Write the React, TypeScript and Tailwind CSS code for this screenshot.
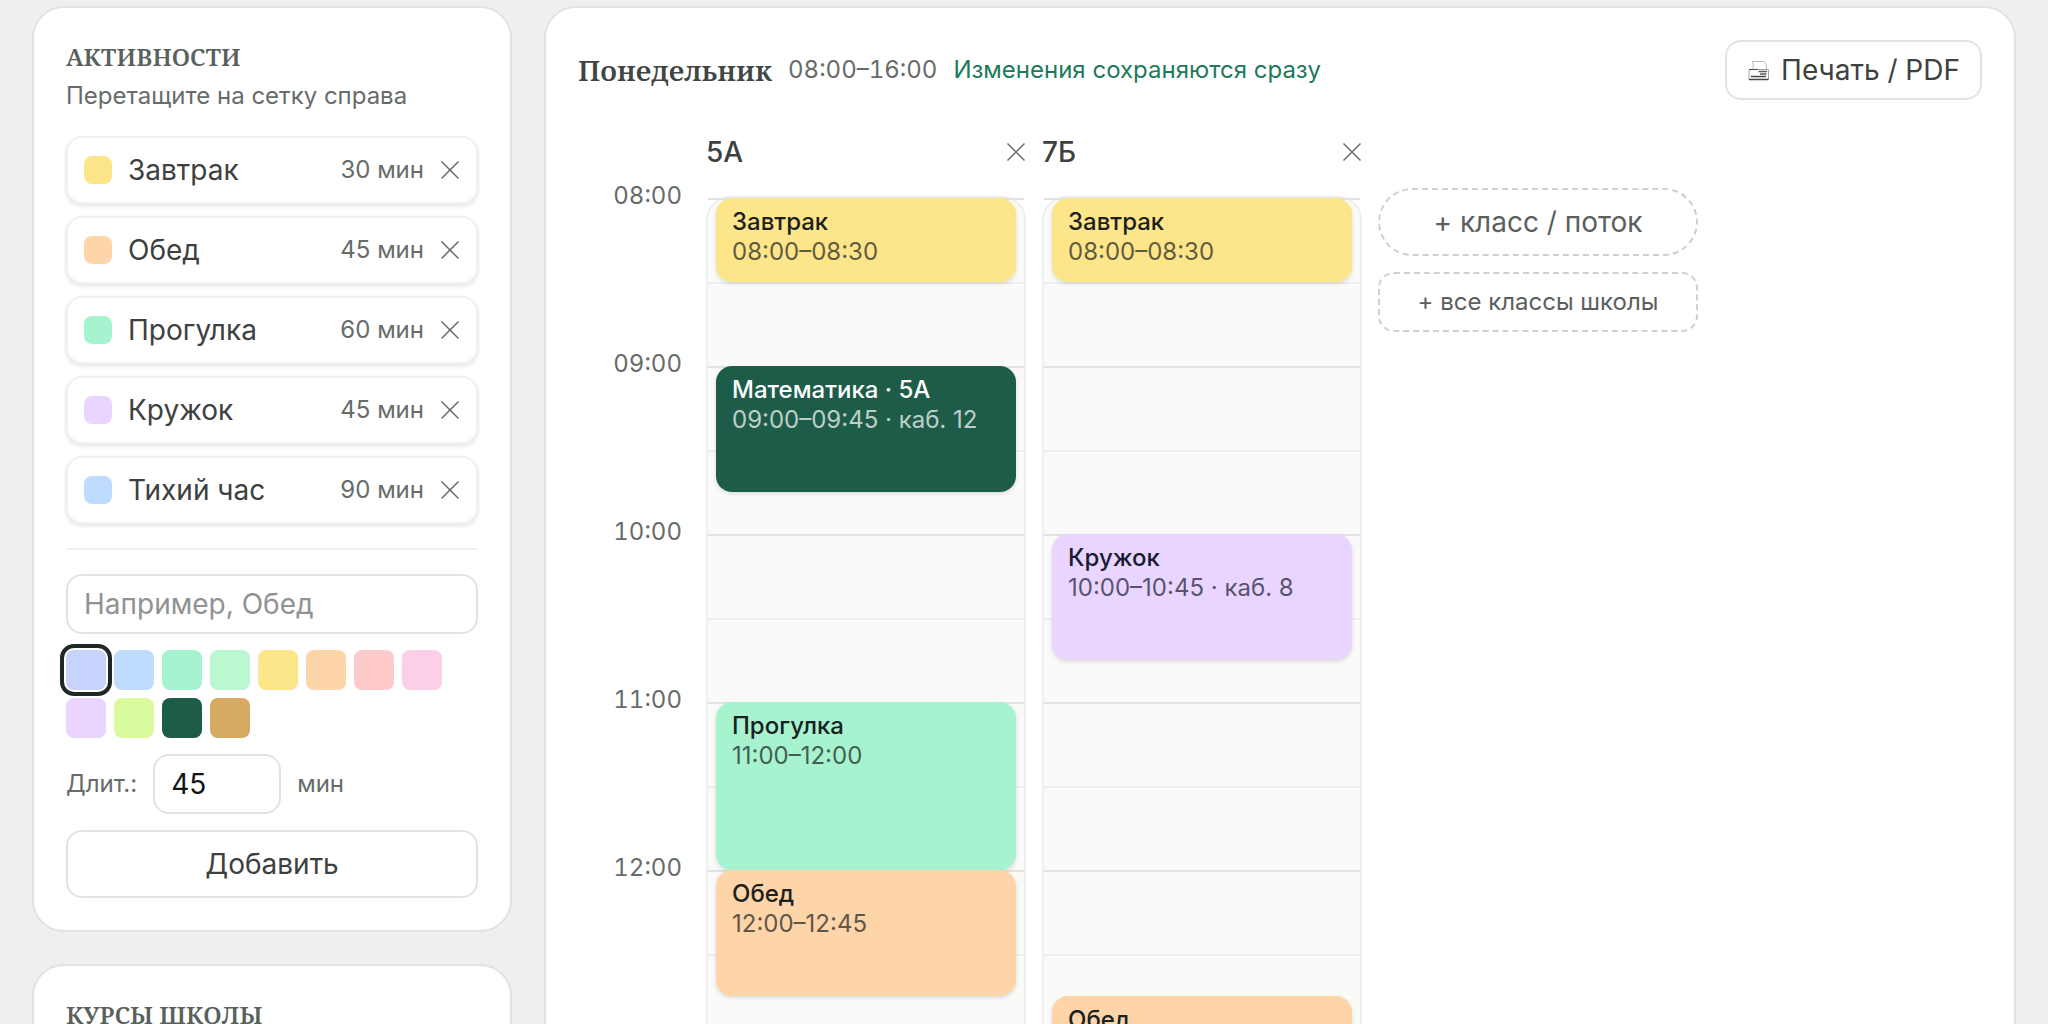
import { useState } from "react";

const PX_PER_MIN = 2.8;
const DAY_START = 8 * 60;

interface Activity {
  name: string;
  minutes: number;
  color: string;
}

interface ScheduleEvent {
  title: string;
  start: number;
  end: number;
  room?: string;
  className: string;
}

interface ClassColumn {
  name: string;
  events: ScheduleEvent[];
}

const ACTIVITIES: Activity[] = [
  { name: "Завтрак", minutes: 30, color: "bg-[#fde58a]" },
  { name: "Обед", minutes: 45, color: "bg-[#fdd5a9]" },
  { name: "Прогулка", minutes: 60, color: "bg-[#a7f3d0]" },
  { name: "Кружок", minutes: 45, color: "bg-[#e9d5ff]" },
  { name: "Тихий час", minutes: 90, color: "bg-[#bfdbfe]" },
];

const PALETTE = [
  { label: "Индиго", color: "bg-[#c7d2fe]" },
  { label: "Голубой", color: "bg-[#bfdbfe]" },
  { label: "Мятный", color: "bg-[#a7f3d0]" },
  { label: "Зелёный", color: "bg-[#bbf7d0]" },
  { label: "Жёлтый", color: "bg-[#fde58a]" },
  { label: "Оранжевый", color: "bg-[#fdd5a9]" },
  { label: "Красный", color: "bg-[#fecaca]" },
  { label: "Розовый", color: "bg-[#fbcfe8]" },
  { label: "Сиреневый", color: "bg-[#e9d5ff]" },
  { label: "Лайм", color: "bg-[#d9f99d]" },
  { label: "Тёмно-зелёный", color: "bg-[#1d5c49]" },
  { label: "Охра", color: "bg-[#d7aa63]" },
];

const COLUMNS: ClassColumn[] = [
  {
    name: "5А",
    events: [
      { title: "Завтрак", start: 480, end: 510, className: "bg-[#fde58a] text-[#1c211f]" },
      { title: "Математика · 5А", start: 540, end: 585, room: "12", className: "bg-[#1d5c49] text-white" },
      { title: "Прогулка", start: 660, end: 720, className: "bg-[#a7f3d0] text-[#17211f]" },
      { title: "Обед", start: 720, end: 765, className: "bg-[#fdd5a9] text-[#1c211f]" },
    ],
  },
  {
    name: "7Б",
    events: [
      { title: "Завтрак", start: 480, end: 510, className: "bg-[#fde58a] text-[#1c211f]" },
      { title: "Кружок", start: 600, end: 645, room: "8", className: "bg-[#e9d5ff] text-[#1a1c33]" },
      { title: "Обед", start: 765, end: 810, className: "bg-[#fdd5a9] text-[#1c211f]" },
    ],
  },
];

const HOURS = [8, 9, 10, 11, 12, 13, 14, 15];

const formatTime = (min: number) =>
  `${String(Math.floor(min / 60)).padStart(2, "0")}:${String(min % 60).padStart(2, "0")}`;

function CloseIcon() {
  return (
    <svg viewBox="0 0 20 20" className="size-5" fill="none" stroke="currentColor" strokeWidth="1.5" aria-hidden="true">
      <path d="M1.5 1.5 18.5 18.5M18.5 1.5 1.5 18.5" />
    </svg>
  );
}

function PrinterIcon() {
  return (
    <svg viewBox="0 0 22 22" className="size-[22px]" fill="none" aria-hidden="true">
      <path d="M5.500 10.500C6.800 7.500 6.300 4.500 5 2.500H17C19 3.500 20 6.500 19.500 10.500" stroke="#b9bcbb" />
      <path d="M2 10.500H21.500V20.500H2Z" stroke="#a3a7a5" />
      <path d="M2 10.500H11" stroke="#454b49" />
      <path d="M4 17.500H19M2 20.500H21.500" stroke="#454b49" strokeWidth="1.300" />
      <path d="M11.500 12.500H20M13 15H19.500" stroke="#5a605d" strokeWidth="1.300" />
    </svg>
  );
}

function PanelTitle({ children }: { children: string }) {
  return (
    <h2 className="font-['Noto_Serif','Liberation_Serif',serif] text-2xl leading-[34px] font-semibold text-[#59615d] uppercase">
      {children}
    </h2>
  );
}

function ActivitiesPanel() {
  const [selected, setSelected] = useState(0);
  const [duration, setDuration] = useState("45");

  return (
    <section className="rounded-[32px] border-2 border-[#e1e4e1] bg-white p-8">
      <PanelTitle>Активности</PanelTitle>
      <p className="mt-1.5 text-2xl leading-8 text-[#666c69]">Перетащите на сетку справа</p>

      <ul className="mt-6 flex flex-col gap-3">
        {ACTIVITIES.map((item) => (
          <li
            key={item.name}
            className="flex h-[68px] items-center gap-4 rounded-2xl border-2 border-[#f0f1f0] bg-white px-4 shadow-[0_2px_4px_rgba(0,0,0,0.12)]"
          >
            <span className={`size-7 rounded-lg ${item.color}`} />
            <span className="flex-1 text-[28px] leading-9 text-[#3c4140]">{item.name}</span>
            <span className="text-2xl leading-8 text-[#666c69]">{item.minutes} мин</span>
            <button type="button" aria-label={`Удалить ${item.name}`} className="text-[#666c69]">
              <CloseIcon />
            </button>
          </li>
        ))}
      </ul>

      {/* New activity form */}
      <form
        className="mt-6 flex flex-col gap-4 border-t-2 border-[#f0f1f0] pt-6"
        onSubmit={(e) => e.preventDefault()}
      >
        <input
          type="text"
          aria-label="Название активности"
          placeholder="Например, Обед"
          className="h-[60px] w-full rounded-2xl border-2 border-[#e1e4e1] bg-white px-4 text-[28px] text-[#1c211f] placeholder:text-[#8f9391]"
        />
        <div className="flex flex-wrap gap-2">
          {PALETTE.map((swatch, i) => (
            <button
              key={swatch.label}
              type="button"
              aria-label={swatch.label}
              aria-pressed={selected === i}
              onClick={() => setSelected(i)}
              className={`size-10 rounded-lg ${swatch.color} ${
                selected === i ? "outline-4 outline-offset-2 outline-[#1f2825]" : ""
              }`}
            />
          ))}
        </div>
        <div className="flex items-center gap-4 text-2xl text-[#666c69]">
          <label htmlFor="duration">Длит.:</label>
          <input
            id="duration"
            type="number"
            value={duration}
            onChange={(e) => setDuration(e.target.value)}
            className="h-[60px] w-32 rounded-2xl border-2 border-[#e1e4e1] bg-white px-4 text-[28px] text-[#111413]"
          />
          <span>мин</span>
        </div>
        <button
          type="submit"
          className="h-[68px] rounded-2xl border-2 border-[#e1e4e1] bg-white text-[28px] text-[#3c4140]"
        >
          Добавить
        </button>
      </form>
    </section>
  );
}

function EventCard({ event }: { event: ScheduleEvent }) {
  return (
    <article
      className={`absolute inset-x-2 rounded-2xl px-4 pt-[9px] text-2xl leading-[30px] shadow-[0_2px_4px_rgba(0,0,0,0.12)] ${event.className}`}
      style={{
        top: (event.start - DAY_START) * PX_PER_MIN,
        height: (event.end - event.start) * PX_PER_MIN,
      }}
    >
      <h4 className="font-medium">{event.title}</h4>
      <p className="opacity-70">
        {formatTime(event.start)}–{formatTime(event.end)}
        {event.room && ` · каб. ${event.room}`}
      </p>
    </article>
  );
}

function DayColumn({ column }: { column: ClassColumn }) {
  return (
    <div className="w-80 shrink-0">
      <div className="flex h-10 items-center justify-between">
        <h3 className="text-[28px] leading-9 font-medium text-[#3c4140]">{column.name}</h3>
        <button type="button" aria-label={`Убрать ${column.name}`} className="text-[#666c69]">
          <CloseIcon />
        </button>
      </div>
      <div className="relative mt-6 rounded-3xl border-2 border-[#eeefee] bg-[#fafaf8]">
        {HOURS.map((hour) => (
          <div key={hour} className="h-[168px] border-t-2 border-[#dfe4e1]">
            <div className="mt-[82px] border-t-2 border-[#eeefee]" />
          </div>
        ))}
        {column.events.map((event) => (
          <EventCard key={event.start} event={event} />
        ))}
      </div>
    </div>
  );
}

export default function App() {
  return (
    <div className="h-screen overflow-y-auto bg-[#eef0ed] px-8 pt-1.5 pb-8 font-[Inter,'Liberation_Sans',sans-serif] [scrollbar-width:none]">
      <div className="flex items-start gap-8">
        <aside className="flex w-[480px] shrink-0 flex-col gap-8">
          <ActivitiesPanel />
          <section className="min-h-80 rounded-[32px] border-2 border-[#e1e4e1] bg-white p-8">
            <PanelTitle>Курсы школы</PanelTitle>
          </section>
        </aside>

        <main className="min-w-0 flex-1 rounded-[32px] border-2 border-[#e1e4e1] bg-white p-8">
          <header className="flex items-center justify-between">
            <div className="flex items-center gap-4 text-2xl leading-8">
              <h1 className="font-['Noto_Serif','Liberation_Serif',serif] text-[28px] leading-9 font-semibold text-[#3f4643]">
                Понедельник
              </h1>
              <span className="text-[#666c69] tabular-nums">08:00–16:00</span>
              <span className="text-[#1c7a5a]">Изменения сохраняются сразу</span>
            </div>
            <button
              type="button"
              className="flex h-[60px] items-center gap-3 rounded-2xl border-2 border-[#e1e4e1] bg-white px-5 text-[28px] text-[#3c4140]"
            >
              <PrinterIcon />
              Печать / PDF
            </button>
          </header>

          {/* Schedule grid */}
          <div className="mt-8 flex gap-4">
            <div className="w-28 shrink-0 pt-12 pr-2 text-right text-2xl leading-8 text-[#666c69] tabular-nums">
              {HOURS.map((hour) => (
                <div key={hour} className="h-[168px]">
                  {formatTime(hour * 60)}
                </div>
              ))}
            </div>
            {COLUMNS.map((column) => (
              <DayColumn key={column.name} column={column} />
            ))}
            <div className="flex w-80 shrink-0 flex-col gap-4 pt-14 text-[#5a605d]">
              <button type="button" className="h-[68px] rounded-full border-2 border-dashed border-[#cdd0ce] text-[28px]">
                + класс / поток
              </button>
              <button type="button" className="h-[60px] rounded-2xl border-2 border-dashed border-[#cdd0ce] text-2xl">
                + все классы школы
              </button>
            </div>
          </div>
        </main>
      </div>
    </div>
  );
}
